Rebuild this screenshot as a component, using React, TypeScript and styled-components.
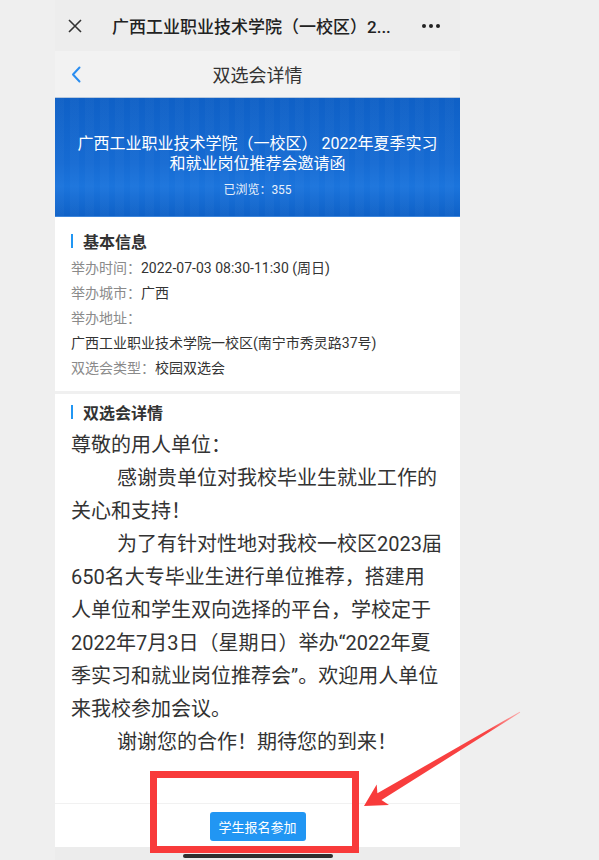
import React from "react";
import styled, { createGlobalStyle } from "styled-components";

const GlobalStyle = createGlobalStyle`
  html, body { margin: 0; padding: 0; background: #efefef; }
  body { font-family: Roboto, "Noto Sans CJK SC", sans-serif; }
  * { box-sizing: border-box; }
`;

const Stage = styled.div`
  position: relative;
  width: 599px;
  height: 860px;
  overflow: hidden;
  background: #efefef;
  display: flex;
  padding-left: 55px;
`;

const Phone = styled.div`
  width: 405px;
  height: 860px;
  display: flex;
  flex-direction: column;
  background: #f2f2f2;
`;

const TopBar = styled.div`
  height: 51px;
  flex: none;
  background: #ededed;
  display: flex;
  align-items: center;
  padding: 0 20px 0 13px;
`;

const CloseBox = styled.div`
  width: 14px;
  height: 14px;
  display: flex;
  color: #333;
`;

const TopTitle = styled.div`
  margin-left: 30px;
  font-size: 17px;
  font-weight: 500;
  color: #222;
  white-space: nowrap;
  flex: 1;
`;

const Dots = styled.div`
  display: flex;
  gap: 3px;
  align-items: center;
`;

const Dot = styled.span`
  width: 4px;
  height: 4px;
  border-radius: 50%;
  background: #222;
`;

const NavBar = styled.div`
  position: relative;
  height: 46px;
  flex: none;
  background: #f2f2f2;
  display: flex;
  align-items: center;
  justify-content: center;
`;

const BackBtn = styled.div`
  position: absolute;
  left: 16px;
  top: 15px;
  width: 10px;
  height: 17px;
  display: flex;
`;

const NavTitle = styled.div`
  font-size: 18px;
  color: #333;
`;

const Banner = styled.div`
  height: 120px;
  flex: none;
  border-top: 1px solid #b8c9dd;
  border-bottom: 1px solid #3d86dc;
  background:
    repeating-linear-gradient(90deg, rgba(255,255,255,0.025) 0 9px, rgba(255,255,255,0) 9px 15px),
    linear-gradient(180deg, #0f60c6 0%, #166bd3 55%, #1b74dc 75%, #0f61c7 100%);
  color: #fff;
  display: flex;
  flex-direction: column;
  align-items: center;
  padding-top: 36px;
`;

const BannerTitle = styled.div`
  font-size: 16px;
  line-height: 20px;
  text-align: center;
  white-space: nowrap;
`;

const BannerViews = styled.div`
  margin-top: 8px;
  font-size: 12px;
  line-height: 16px;
  color: #e8f0fb;
`;

const Card = styled.div<{ $top: number; $grow?: boolean }>`
  background: #fff;
  padding: ${(p) => p.$top}px 16px 10px 16px;
  flex: ${(p) => (p.$grow ? "1" : "none")};
`;

const Gap = styled.div`
  height: 3px;
  flex: none;
  background: #f0f0f0;
`;

const SectionHead = styled.div`
  display: flex;
  align-items: center;
  height: 22px;
  font-size: 16px;
  font-weight: 700;
  color: #333;
`;

const Bar = styled.span`
  width: 2px;
  height: 14px;
  background: #2196f3;
  margin-right: 10px;
`;

const InfoList = styled.div`
  margin-top: 4px;
  display: flex;
  flex-direction: column;
`;

const InfoRow = styled.div`
  font-size: 14px;
  line-height: 25px;
  color: #333;
  white-space: nowrap;
`;

const Label = styled.span`
  color: #8a8a8a;
`;

const Body = styled.div`
  margin-top: 6px;
  font-size: 20px;
  line-height: 33px;
  color: #333;
  white-space: nowrap;
`;

const Para = styled.p<{ $indent?: boolean }>`
  margin: 0;
  text-indent: ${(p) => (p.$indent ? "46px" : "0")};
`;

const Footer = styled.div`
  height: 44px;
  flex: none;
  background: #fff;
  border-top: 1px solid #f1f1f1;
  display: flex;
  justify-content: center;
  padding-top: 8px;
`;

const JoinButton = styled.button`
  width: 96px;
  height: 29px;
  border: none;
  border-radius: 3px;
  background: #2196f3;
  color: #fff;
  font-family: Roboto, "Noto Sans CJK SC", sans-serif;
  font-size: 13px;
  padding: 0;
`;

const SystemBar = styled.div`
  height: 13px;
  flex: none;
  background: #ececec;
  display: flex;
  justify-content: center;
  padding-top: 7px;
`;

const HomeIndicator = styled.span`
  width: 150px;
  height: 4px;
  border-radius: 2px;
  background: #2e2e2e;
`;

const HighlightBox = styled.div`
  position: absolute;
  left: 150px;
  top: 771px;
  width: 209px;
  height: 82px;
  border: 7px solid #f83a3a;
  pointer-events: none;
`;

const ArrowSvg = styled.svg`
  position: absolute;
  left: 0;
  top: 0;
  pointer-events: none;
`;

export default function App() {
  return (
    <>
      <GlobalStyle />
      <Stage>
        <Phone>
          <TopBar>
            <CloseBox>
              <svg width="14" height="14" viewBox="0 0 14 14">
                <path d="M1 1 L13 13 M13 1 L1 13" stroke="#333" strokeWidth="1.6" fill="none" />
              </svg>
            </CloseBox>
            <TopTitle>广西工业职业技术学院（一校区）2...</TopTitle>
            <Dots>
              <Dot />
              <Dot />
              <Dot />
            </Dots>
          </TopBar>
          <NavBar>
            <BackBtn>
              <svg width="10" height="17" viewBox="0 0 10 17">
                <path d="M8.5 1.5 L2 8.5 L8.5 15.5" stroke="#2a8df0" strokeWidth="2" fill="none" strokeLinecap="round" strokeLinejoin="round" />
              </svg>
            </BackBtn>
            <NavTitle>双选会详情</NavTitle>
          </NavBar>
          <Banner>
            <BannerTitle>广西工业职业技术学院（一校区） 2022年夏季实习</BannerTitle>
            <BannerTitle>和就业岗位推荐会邀请函</BannerTitle>
            <BannerViews>已浏览：355</BannerViews>
          </Banner>
          <Card $top={13}>
            <SectionHead>
              <Bar />
              基本信息
            </SectionHead>
            <InfoList>
              <InfoRow>
                <Label>举办时间：</Label>2022-07-03 08:30-11:30 (周日)
              </InfoRow>
              <InfoRow>
                <Label>举办城市：</Label>广西
              </InfoRow>
              <InfoRow>
                <Label>举办地址：</Label>
              </InfoRow>
              <InfoRow>广西工业职业技术学院一校区(南宁市秀灵路37号)</InfoRow>
              <InfoRow>
                <Label>双选会类型：</Label>校园双选会
              </InfoRow>
            </InfoList>
          </Card>
          <Gap />
          <Card $top={7} $grow>
            <SectionHead>
              <Bar />
              双选会详情
            </SectionHead>
            <Body>
              <Para>尊敬的用人单位：</Para>
              <Para $indent>
                感谢贵单位对我校毕业生就业工作的
                <br />
                关心和支持！
              </Para>
              <Para $indent>
                为了有针对性地对我校一校区2023届
                <br />
                650名大专毕业生进行单位推荐，搭建用
                <br />
                人单位和学生双向选择的平台，学校定于
                <br />
                2022年7月3日（星期日）举办“2022年夏
                <br />
                季实习和就业岗位推荐会”。欢迎用人单位
                <br />
                来我校参加会议。
              </Para>
              <Para $indent>谢谢您的合作！期待您的到来！</Para>
            </Body>
          </Card>
          <Footer>
            <JoinButton>学生报名参加</JoinButton>
          </Footer>
          <SystemBar>
            <HomeIndicator />
          </SystemBar>
        </Phone>
        <HighlightBox />
        <ArrowSvg width="599" height="860" viewBox="0 0 599 860">
          <defs>
            <linearGradient id="arrowFade" x1="364" y1="806" x2="520" y2="712" gradientUnits="userSpaceOnUse">
              <stop offset="0" stopColor="#f83a3a" />
              <stop offset="0.8" stopColor="#f84444" />
              <stop offset="1" stopColor="#fbb0b0" />
            </linearGradient>
          </defs>
          <polygon
            points="364,806 376.7,784.4 377.4,793.3 519.7,711.7 520.2,712.5 381.5,800.1 389,804.9"
            fill="url(#arrowFade)"
          />
        </ArrowSvg>
      </Stage>
    </>
  );
}
